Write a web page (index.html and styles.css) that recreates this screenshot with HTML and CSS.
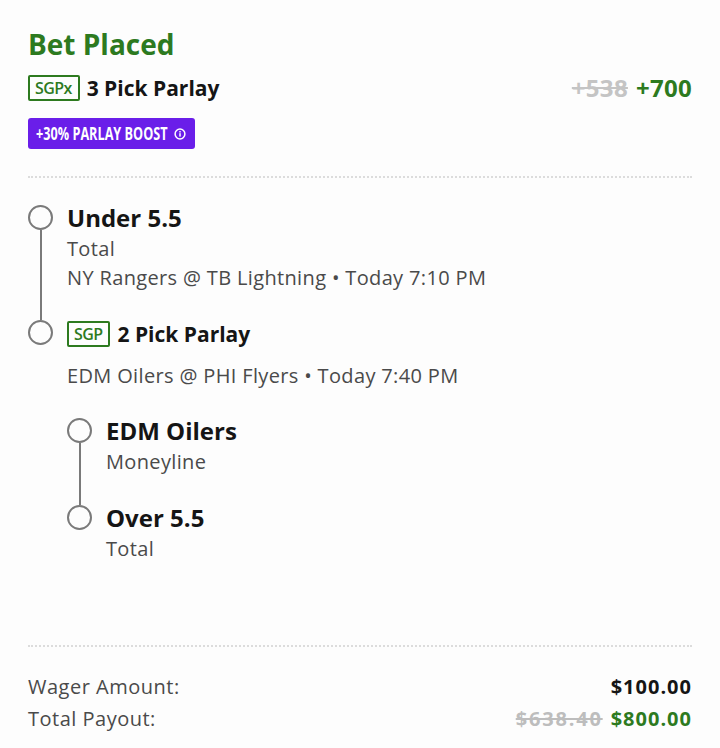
FILE: index.html
```html
<!DOCTYPE html>
<html>
<head>
<meta charset="utf-8">
<link rel="stylesheet" href="styles.css">
</head>
<body>
<div class="slip">
  <h1 class="status">Bet Placed</h1>
  <div class="parlay-row">
    <div class="parlay-title"><span class="tag">SGPx</span><span class="parlay-name">3 Pick Parlay</span></div>
    <div class="odds"><span class="old-odds">+538</span><span class="new-odds">+700</span></div>
  </div>
  <div class="boost"><span class="boost-text">+30% PARLAY BOOST</span>
    <svg class="info" viewBox="0 0 12 12" width="12" height="12"><circle cx="6" cy="6" r="4.9" fill="none" stroke="#fff" stroke-width="1.5"/><rect x="5.25" y="5.2" width="1.5" height="3.4" fill="#fff"/><rect x="5.25" y="3.1" width="1.5" height="1.4" fill="#fff"/></svg>
  </div>
  <hr class="divider">

  <div class="legs">
    <div class="leg">
      <div class="marker"><span class="dot"></span><span class="line"></span></div>
      <div class="leg-body first">
        <div class="pick">Under 5.5</div>
        <div class="market">Total</div>
        <div class="event">NY Rangers @ TB Lightning • Today 7:10 PM</div>
      </div>
    </div>
    <div class="leg">
      <div class="marker"><span class="dot"></span></div>
      <div class="leg-body">
        <div class="sgp-title"><span class="tag">SGP</span><span class="parlay-name">2 Pick Parlay</span></div>
        <div class="event sgp-event">EDM Oilers @ PHI Flyers • Today 7:40 PM</div>
        <div class="legs nested">
          <div class="leg">
            <div class="marker"><span class="dot"></span><span class="line"></span></div>
            <div class="leg-body first">
              <div class="pick">EDM Oilers</div>
              <div class="market">Moneyline</div>
            </div>
          </div>
          <div class="leg">
            <div class="marker"><span class="dot"></span></div>
            <div class="leg-body">
              <div class="pick">Over 5.5</div>
              <div class="market">Total</div>
            </div>
          </div>
        </div>
      </div>
    </div>
  </div>

  <hr class="divider bottom">
  <div class="summary">
    <div class="sum-row"><span class="label">Wager Amount:</span><span class="amount">$100.00</span></div>
    <div class="sum-row"><span class="label">Total Payout:</span><span class="amount"><span class="old-pay">$638.40</span><span class="new-pay">$800.00</span></span></div>
  </div>
</div>
</body>
</html>
```

FILE: styles.css
```css
html, body {
  margin: 0;
  padding: 0;
  background: #fdfdfd;
}
body {
  font-family: "Open Sans", "Noto Sans", sans-serif;
  color: #151515;
}
.slip {
  padding: 25px 28px 0 28px;
}
.status {
  margin: 0;
  font-size: 28px;
  line-height: 38px;
  font-weight: 700;
  color: #2d7a1f;
}
.parlay-row {
  display: flex;
  justify-content: space-between;
  align-items: center;
  margin-top: 8px;
}
.parlay-title, .sgp-title {
  display: flex;
  align-items: center;
  gap: 7px;
}
.tag {
  display: inline-block;
  border: 2px solid #2d7a1f;
  border-radius: 2px;
  color: #2d7a1f;
  font-family: "Open Sans", sans-serif;
  font-weight: 600;
  font-size: 16px;
  letter-spacing: -0.6px;
  line-height: 22px;
  padding: 0 6px 0 5px;
}
.parlay-name {
  font-size: 21px;
  line-height: 28px;
  font-weight: 700;
}
.odds {
  display: flex;
  gap: 8px;
  align-items: baseline;
  font-size: 24px;
  font-weight: 700;
  letter-spacing: 0.3px;
}
.old-odds {
  color: #c4c4c4;
  text-decoration: line-through;
}
.new-odds {
  color: #2d7a1f;
}
.boost {
  display: inline-flex;
  align-items: center;
  margin-top: 14px;
  height: 31px;
  padding: 0 9px 0 8px;
  background: #6a1ee9;
  color: #fff;
  border-radius: 3px;
  font-family: "Open Sans", sans-serif;
  font-weight: 700;
  font-size: 17px;
}
.boost-text {
  display: inline-block;
  transform: scaleX(0.745);
  transform-origin: left center;
  margin-right: -39px;
  white-space: nowrap;
}
.divider {
  border: 0;
  border-top: 2px dotted #dcdcdc;
  margin: 27px 0 0 0;
}
.legs {
  margin-top: 27px;
  display: flex;
  flex-direction: column;
}
.leg {
  display: flex;
  gap: 14px;
}
.marker {
  display: flex;
  flex-direction: column;
  align-items: center;
  width: 25px;
  flex: 0 0 25px;
}
.dot {
  width: 21px;
  height: 21px;
  border: 2px solid #7a7a7a;
  border-radius: 50%;
  flex: 0 0 auto;
}
.line {
  flex: 1;
  width: 2px;
  background: #7a7a7a;
}
.leg-body {
  flex: 1;
}
.leg-body.first {
  padding-bottom: 28px;
}
.pick {
  font-size: 24px;
  line-height: 26px;
  font-weight: 700;
}
.market, .event {
  font-size: 20px;
  line-height: 29px;
  letter-spacing: 0.35px;
  color: #4a4a4a;
}
.market {
  margin-top: 3px;
}
.sgp-event {
  margin-top: 13px;
}
.nested {
  margin-top: 28px;
}
.nested .leg-body.first {
  padding-bottom: 29px;
}
.divider.bottom {
  margin-top: 82px;
}
.summary {
  margin-top: 24px;
}
.sum-row {
  display: flex;
  justify-content: space-between;
  font-size: 20px;
  line-height: 32px;
}
.label {
  color: #4a4a4a;
  letter-spacing: 0.5px;
}
.amount {
  font-weight: 700;
  display: flex;
  gap: 8px;
  letter-spacing: 1px;
}
.old-pay {
  color: #bdbdbd;
  text-decoration: line-through;
  letter-spacing: 1.8px;
}
.new-pay {
  color: #2d7a1f;
}
```
